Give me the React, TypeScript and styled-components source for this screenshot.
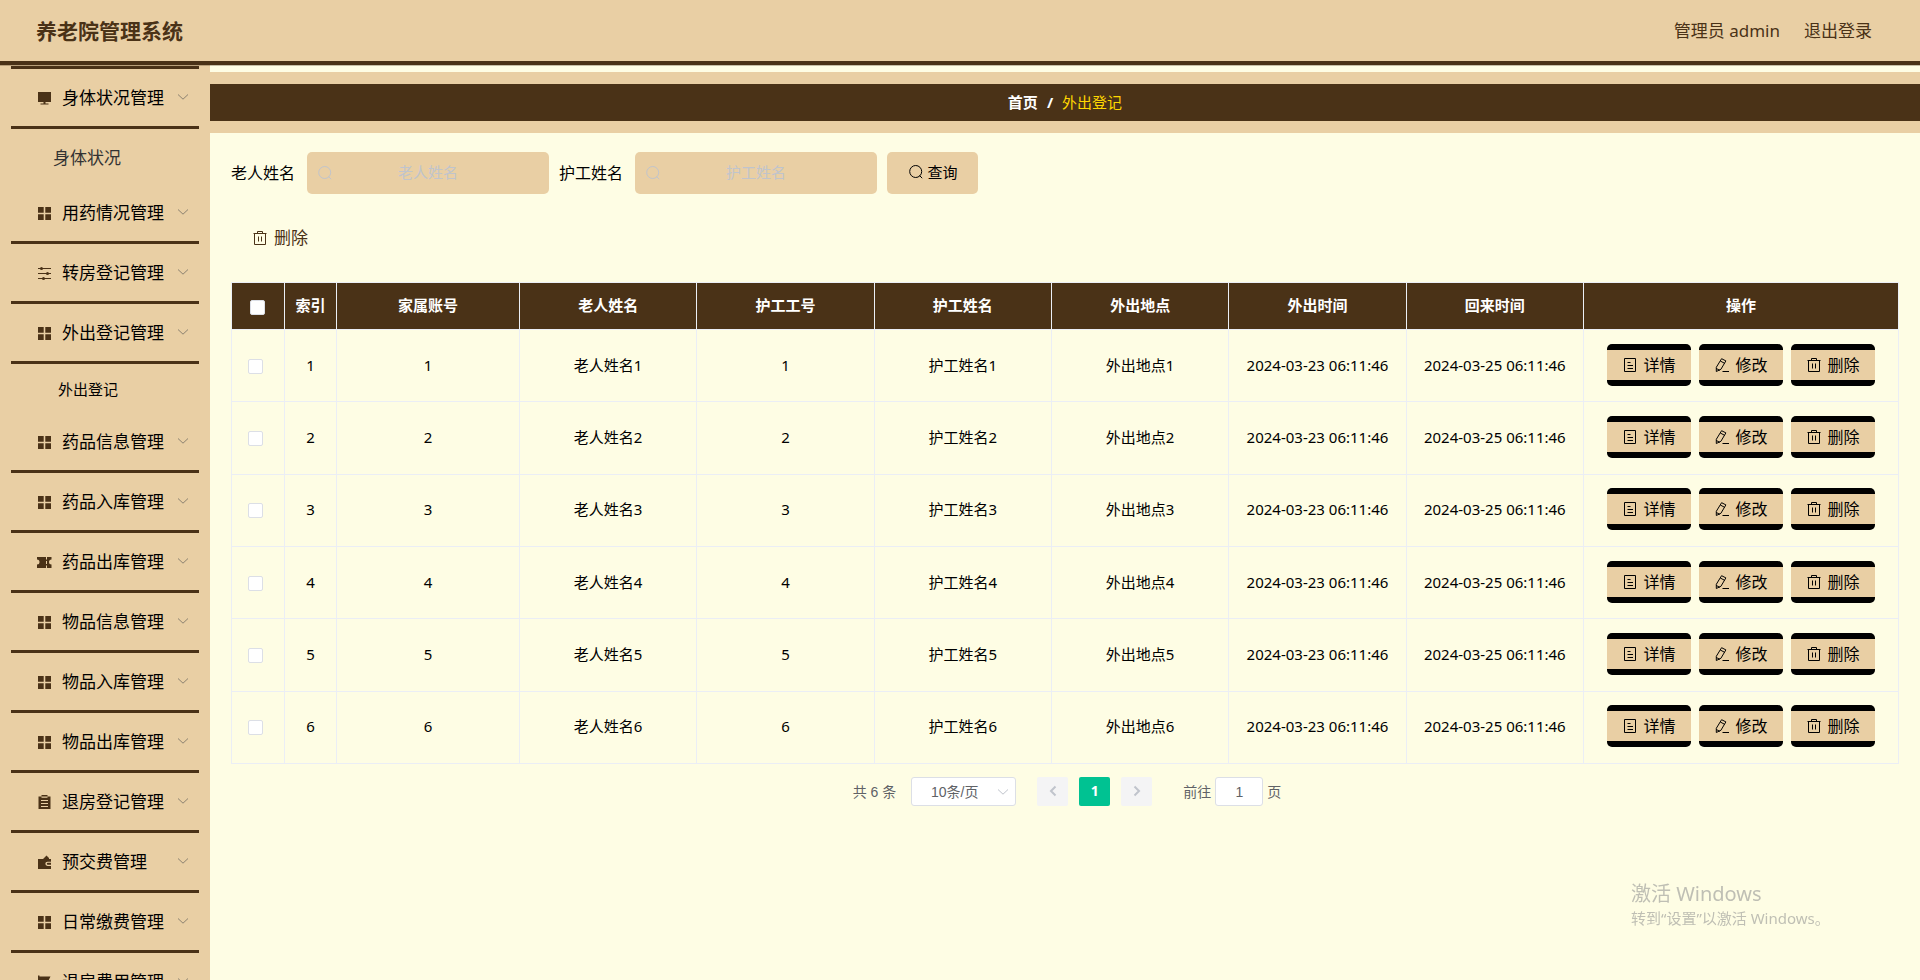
import React from 'react';
import styled, { createGlobalStyle, css } from 'styled-components';

const color = {
  tan: '#e9cfa4',
  brown: '#4a3217',
  cream: '#fefde4',
  line: '#ebeef5',
  border: '#dcdfe6',
  muted: '#606266',
  faint: '#c0c4cc',
  gold: '#ffd700',
  green: '#00c292',
};

const sans = '"Noto Sans", "Noto Sans CJK SC", sans-serif';
const arial = '"Liberation Sans", "Noto Sans CJK SC", sans-serif';

const GlobalStyle = createGlobalStyle`
  *, *::before, *::after { box-sizing: border-box; }
  body {
    margin: 0;
    background: ${color.cream};
    color: #000;
    font-family: ${sans};
    font-size: 15px;
    line-height: 20px;
  }
  button, input, select { font: inherit; color: inherit; margin: 0; }
  button { cursor: pointer; }
`;

/* ---------- icons ---------- */

const Glyph = styled.svg<{ $size?: number }>`
  flex: none;
  display: block;
  width: ${(p) => p.$size ?? 16}px;
  height: ${(p) => p.$size ?? 16}px;
`;

const stroke = { fill: 'none', stroke: 'currentColor', strokeWidth: 1 } as const;

const SearchIcon = () => (
  <Glyph viewBox="0 0 16 16" aria-hidden="true">
    <circle cx="7.7" cy="7.5" r="6" {...stroke} />
    <path d="M11.5 11.5 14.2 14.2" {...stroke} />
  </Glyph>
);
const TrashIcon = () => (
  <Glyph viewBox="0 0 16 16" aria-hidden="true">
    <path d="M1.5 3.5h13M5.500 3.500v-2h5v2M2.500 3.500v11h11v-11M6.500 6.500v5M9.500 6.500v5" {...stroke} />
  </Glyph>
);
const DocumentIcon = () => (
  <Glyph viewBox="0 0 16 16" aria-hidden="true">
    <path d="M2.500 1.500h11v13h-11zM5.500 5.500h3M5.500 8.500h5.500M5.500 11.500h5.500" {...stroke} />
  </Glyph>
);
const EditIcon = () => (
  <Glyph viewBox="0 0 16 16" aria-hidden="true">
    <path
      d="M7.600 1.700 11.900 3.900 6.900 12.300 2.300 14.500 2.300 10.300zM6.300 4l4.300 2.300M2.300 11.500l3.500 1.800M8.500 14.500h6.500"
      {...stroke}
      strokeLinejoin="round"
    />
  </Glyph>
);
const Chevron = ({ d, size = 12, width = 1 }: { d: string; size?: number; width?: number }) => (
  <Glyph $size={size} viewBox="0 0 12 12" aria-hidden="true">
    <path d={d} {...stroke} strokeWidth={width} />
  </Glyph>
);
const DOWN = 'M1 3.500 6 8.200 11 3.500';

const menuShapes: Record<string, React.ReactNode> = {
  monitor: <path d="M2 2h13v10H2zM7.500 12h2v1.500h-2zM4.500 13.500h8v1h-8z" />,
  grid: <path d="M2 2h5.700v5.700H2zM9.300 2H15v5.700H9.300zM2 9.300h5.700V15H2zM9.300 9.300H15V15H9.300z" />,
  sliders: (
    <>
      <path d="M2 3.500h13M2 8.500h13M2 13.500h13" {...stroke} />
      <circle cx="5.500" cy="3.500" r="1.500" />
      <circle cx="11.500" cy="8.500" r="1.500" />
      <circle cx="7.500" cy="13.500" r="1.500" />
    </>
  ),
  ticket: (
    <path
      fillRule="evenodd"
      d="M1 3h14.500v2.600a2.400 2.400 0 0 0 0 5V14H1v-3.400a2.400 2.400 0 0 0 0-5zM10 3v2.400h1V3zM10 7v3h1V7zM10 11.600v2.400h1v-2.400z"
    />
  ),
  order: (
    <path
      fillRule="evenodd"
      d="M2.500 2.500h3V1h6v1.500h3V15h-12zM5.500 2.500v1.200h6V2.500zM5 6v1.100h7V6zM5 9v1.100h7V9zM5 12v1.100h7V12z"
    />
  ),
  wallet: (
    <path
      fillRule="evenodd"
      d="M2 5h5l3.500-3.500L13 4v1h2v2.700h-3.500a2 2 0 0 0 0 4.300H15v3H2zM11.800 8.800H15v2h-3.200a1 1 0 0 1 0-2z"
    />
  ),
  flag: <path d="M2 1.500h1.500v1H14.500l-2.500 5 2.500 5H4v3H2z" />,
};

const MenuIcon = ({ name }: { name: string }) => (
  <Glyph viewBox="0 0 16 16" fill={color.brown} color={color.brown} aria-hidden="true">
    {menuShapes[name]}
  </Glyph>
);

/* ---------- page frame ---------- */

const Page = styled.div`
  display: flex;
  flex-direction: column;
  height: 100vh;
  overflow: hidden;
`;

const Header = styled.header`
  flex: none;
  position: relative;
  z-index: 1;
  display: flex;
  align-items: center;
  justify-content: space-between;
  height: 65px;
  padding: 0 48px 0 36px;
  background: ${color.tan};
  border-bottom: 4px solid ${color.brown};
  box-shadow: 0 1px 0 rgba(74, 49, 24, 0.3);
  color: ${color.brown};
`;

const Brand = styled.h1`
  margin: 0;
  font-size: 21px;
  line-height: 28px;
  font-weight: 700;
`;

const Account = styled.div`
  display: flex;
  gap: 24px;
  font-size: 17px;
  line-height: 24px;
`;

const PlainLink = styled.a`
  color: inherit;
  text-decoration: none;
`;

const Body = styled.div`
  flex: 1;
  min-height: 0;
  display: flex;
`;

/* ---------- sidebar ---------- */

const Sidebar = styled.nav`
  flex: none;
  width: 210px;
  padding: 1px 11px 0;
  overflow: hidden;
  background: ${color.tan};
`;

const MenuList = styled.ul`
  margin: 0;
  padding: 0;
  list-style: none;
  border-top: 3px solid ${color.brown};
`;

const MenuButton = styled.button`
  display: flex;
  align-items: center;
  gap: 10px;
  width: 100%;
  height: 60px;
  padding: 0 10px 0 25px;
  background: none;
  border: 0;
  border-bottom: 3px solid ${color.brown};
  font-size: 17px;
  line-height: 24px;
  text-align: left;
  white-space: nowrap;
`;

const MenuText = styled.span`
  flex: 1;
`;

const MenuArrow = styled.span`
  padding-bottom: 2px;
  color: #8c8270;
`;

const SubLink = styled.a<{ $active?: boolean }>`
  display: flex;
  align-items: center;
  text-decoration: none;
  ${(p) =>
    p.$active
      ? css`
          height: 49px;
          padding-left: 47px;
          font-size: 15px;
          color: #000;
        `
      : css`
          height: 55px;
          padding: 2px 0 0 42px;
          font-size: 17px;
          color: #333;
        `}
`;

/* ---------- content ---------- */

const Main = styled.main`
  flex: 1;
  min-width: 0;
  overflow: hidden;
`;

const CrumbBand = styled.div`
  margin-top: 7px;
  padding: 12px 0;
  background: ${color.tan};
`;

const Crumbs = styled.div`
  display: flex;
  align-items: center;
  justify-content: center;
  gap: 9px;
  height: 37px;
  padding-bottom: 2px;
  background: ${color.brown};
  color: #fff;
  font-weight: 700;
`;

const CurrentCrumb = styled.span`
  color: ${color.gold};
  font-weight: 400;
`;

const Panel = styled.section`
  padding: 19px 21px 0;
`;

const SearchForm = styled.form`
  display: flex;
  align-items: center;
  gap: 10px;
`;

const Field = styled.div`
  display: flex;
  align-items: center;
  gap: 12px;
  font-size: 16px;
`;

const InputWrap = styled.div`
  position: relative;
  color: ${color.faint};
`;

const InputIcon = styled.span`
  position: absolute;
  left: 10px;
  top: 13px;
`;

const SearchInput = styled.input`
  display: block;
  width: 242px;
  height: 42px;
  padding: 0 30px 2px;
  border: 0;
  border-radius: 5px;
  background: ${color.tan};
  color: #000;
  font-size: 15px;
  text-align: center;
  &::placeholder {
    color: ${color.faint};
    opacity: 1;
  }
`;

const SearchButton = styled.button`
  display: flex;
  align-items: center;
  justify-content: center;
  gap: 4px;
  width: 91px;
  height: 42px;
  padding: 0 0 2px;
  border: 0;
  border-radius: 5px;
  background: ${color.tan};
`;

const BulkBar = styled.div`
  display: flex;
  padding: 32px 21px;
`;

const BulkButton = styled.button`
  display: flex;
  align-items: center;
  gap: 6px;
  padding: 0;
  border: 0;
  background: none;
  color: ${color.brown};
  font-size: 17px;
  line-height: 24px;
`;

const Table = styled.table`
  width: 100%;
  height: 482px;
  table-layout: fixed;
  border-collapse: separate;
  border-spacing: 0;
  border-top: 1px solid ${color.line};
  border-left: 1px solid ${color.line};
  text-align: center;
`;

const Col = styled.col<{ $w?: number }>`
  ${(p) => p.$w && `width: ${p.$w}px;`}
`;

const cell = css`
  padding: 0 0 2px;
  border-right: 1px solid ${color.line};
  border-bottom: 1px solid ${color.line};
  white-space: nowrap;
`;

const HeadCell = styled.th`
  ${cell}
  height: 47px;
  background: ${color.brown};
  color: #fff;
  font-weight: 700;
`;

const HeadCheckCell = styled(HeadCell)`
  padding: 2px 2px 0 0;
`;

const Cell = styled.td`
  ${cell}
  height: 72px;
`;

const CheckCell = styled(Cell)`
  padding: 1px 5px 0 0;
`;

const Check = styled.input`
  appearance: none;
  display: block;
  width: 15px;
  height: 15px;
  margin: 0 auto;
  border: 1px solid ${color.border};
  border-radius: 2px;
  background: #fff;
  &:checked {
    background: ${color.green};
  }
`;

const Actions = styled.div`
  display: flex;
  justify-content: center;
  gap: 8px;
`;

const ActionButton = styled.button`
  display: flex;
  align-items: center;
  justify-content: center;
  gap: 5px;
  width: 84px;
  height: 42px;
  padding: 0;
  border: solid #000;
  border-width: 6px 0;
  border-radius: 5px;
  background: ${color.tan};
  font-size: 16px;
`;

/* ---------- pagination ---------- */

const Pagination = styled.div`
  display: flex;
  align-items: center;
  justify-content: center;
  padding: 13px 0 0 4px;
  color: ${color.muted};
  font-family: ${arial};
  font-size: 14px;
`;

const SizeWrap = styled.div`
  position: relative;
  margin: 0 21px 0 15px;
`;

const SizeSelect = styled.select`
  appearance: none;
  display: block;
  width: 105px;
  height: 29px;
  padding: 0 18px 0 0;
  border: 1px solid ${color.border};
  border-radius: 3px;
  background: #fff;
  text-align: center;
  text-align-last: center;
`;

const SizeArrow = styled.span`
  position: absolute;
  right: 7px;
  top: 9px;
  color: ${color.faint};
  pointer-events: none;
`;

const Pager = styled.div`
  display: flex;
  gap: 11px;
`;

const PageButton = styled.button<{ $active?: boolean }>`
  display: flex;
  align-items: center;
  justify-content: center;
  width: 31px;
  height: 29px;
  padding: 0 0 2px;
  border: 0;
  border-radius: 2px;
  background: ${(p) => (p.$active ? color.green : '#f4f4f5')};
  color: ${(p) => (p.$active ? '#fff' : color.faint)};
  font-family: ${sans};
  font-weight: 700;
`;

const Jump = styled.label`
  display: flex;
  align-items: center;
  gap: 4px;
  margin-left: 31px;
`;

const JumpInput = styled.input`
  width: 48px;
  height: 29px;
  padding: 0;
  border: 1px solid ${color.border};
  border-radius: 3px;
  background: #fff;
  text-align: center;
`;

/* ---------- system notice laid over the page ---------- */

const Notice = styled.aside`
  position: fixed;
  right: 89px;
  bottom: 52px;
  width: 200px;
  color: #bfbfb4;
  line-height: 20px;
  white-space: nowrap;
  pointer-events: none;
`;

const NoticeTitle = styled.div`
  font-size: 20px;
  line-height: 28px;
`;

/* ---------- data ---------- */

type MenuEntry = { label: string; icon: string; sub?: string; active?: boolean };

const menu: MenuEntry[] = [
  { label: '身体状况管理', icon: 'monitor', sub: '身体状况' },
  { label: '用药情况管理', icon: 'grid' },
  { label: '转房登记管理', icon: 'sliders' },
  { label: '外出登记管理', icon: 'grid', sub: '外出登记', active: true },
  { label: '药品信息管理', icon: 'grid' },
  { label: '药品入库管理', icon: 'grid' },
  { label: '药品出库管理', icon: 'ticket' },
  { label: '物品信息管理', icon: 'grid' },
  { label: '物品入库管理', icon: 'grid' },
  { label: '物品出库管理', icon: 'grid' },
  { label: '退房登记管理', icon: 'order' },
  { label: '预交费管理', icon: 'wallet' },
  { label: '日常缴费管理', icon: 'grid' },
  { label: '退房费用管理', icon: 'flag' },
];

const columns = ['家属账号', '老人姓名', '护工工号', '护工姓名', '外出地点', '外出时间', '回来时间'];

const rows = [1, 2, 3, 4, 5, 6].map((n) => ({
  id: n,
  values: [`${n}`, `老人姓名${n}`, `${n}`, `护工姓名${n}`, `外出地点${n}`, '2024-03-23 06:11:46', '2024-03-25 06:11:46'],
}));

const SearchField = ({ id, label }: { id: string; label: string }) => (
  <Field>
    <label htmlFor={id}>{label}</label>
    <InputWrap>
      <InputIcon>
        <SearchIcon />
      </InputIcon>
      <SearchInput id={id} type="text" placeholder={label} />
    </InputWrap>
  </Field>
);

export default function App() {
  return (
    <Page>
      <GlobalStyle />
      <Header>
        <Brand>养老院管理系统</Brand>
        <Account>
          <span>管理员 admin</span>
          <PlainLink href="#logout">退出登录</PlainLink>
        </Account>
      </Header>
      <Body>
        <Sidebar>
          <MenuList>
            {menu.map((m) => (
              <li key={m.label}>
                <MenuButton type="button">
                  <MenuIcon name={m.icon} />
                  <MenuText>{m.label}</MenuText>
                  <MenuArrow>
                    <Chevron d={DOWN} />
                  </MenuArrow>
                </MenuButton>
                {m.sub && (
                  <SubLink href="#list" $active={m.active}>
                    {m.sub}
                  </SubLink>
                )}
              </li>
            ))}
          </MenuList>
        </Sidebar>
        <Main>
          <CrumbBand>
            <Crumbs>
              <PlainLink href="#home">首页</PlainLink>
              <span>/</span>
              <CurrentCrumb>外出登记</CurrentCrumb>
            </Crumbs>
          </CrumbBand>
          <Panel>
            <SearchForm onSubmit={(e) => e.preventDefault()}>
              <SearchField id="elder" label="老人姓名" />
              <SearchField id="nurse" label="护工姓名" />
              <SearchButton type="submit">
                <SearchIcon />
                查询
              </SearchButton>
            </SearchForm>
            <BulkBar>
              <BulkButton type="button">
                <TrashIcon />
                删除
              </BulkButton>
            </BulkBar>
            <Table>
              <colgroup>
                <Col $w={53} />
                <Col $w={52} />
                <Col $w={183} />
                <Col span={6} />
                <Col $w={315} />
              </colgroup>
              <thead>
                <tr>
                  <HeadCheckCell>
                    <Check type="checkbox" aria-label="全选" />
                  </HeadCheckCell>
                  <HeadCell>索引</HeadCell>
                  {columns.map((c) => (
                    <HeadCell key={c}>{c}</HeadCell>
                  ))}
                  <HeadCell>操作</HeadCell>
                </tr>
              </thead>
              <tbody>
                {rows.map((r) => (
                  <tr key={r.id}>
                    <CheckCell>
                      <Check type="checkbox" aria-label={`选择 ${r.id}`} />
                    </CheckCell>
                    <Cell>{r.id}</Cell>
                    {r.values.map((v, i) => (
                      <Cell key={i}>{v}</Cell>
                    ))}
                    <Cell>
                      <Actions>
                        <ActionButton type="button">
                          <DocumentIcon />
                          详情
                        </ActionButton>
                        <ActionButton type="button">
                          <EditIcon />
                          修改
                        </ActionButton>
                        <ActionButton type="button">
                          <TrashIcon />
                          删除
                        </ActionButton>
                      </Actions>
                    </Cell>
                  </tr>
                ))}
              </tbody>
            </Table>
            <Pagination>
              <span>共 6 条</span>
              <SizeWrap>
                <SizeSelect aria-label="每页条数" defaultValue="10">
                  <option value="10">10条/页</option>
                </SizeSelect>
                <SizeArrow>
                  <Chevron d={DOWN} />
                </SizeArrow>
              </SizeWrap>
              <Pager>
                <PageButton type="button" aria-label="上一页">
                  <Chevron d="M8.500 1.500 4 6l4.500 4.500" width={2} />
                </PageButton>
                <PageButton type="button" $active>
                  1
                </PageButton>
                <PageButton type="button" aria-label="下一页">
                  <Chevron d="M3.500 1.500 8 6l-4.500 4.500" width={2} />
                </PageButton>
              </Pager>
              <Jump>
                前往
                <JumpInput type="text" defaultValue="1" />
                页
              </Jump>
            </Pagination>
          </Panel>
        </Main>
      </Body>
      <Notice>
        <NoticeTitle>激活 Windows</NoticeTitle>
        转到“设置”以激活 Windows。
      </Notice>
    </Page>
  );
}
